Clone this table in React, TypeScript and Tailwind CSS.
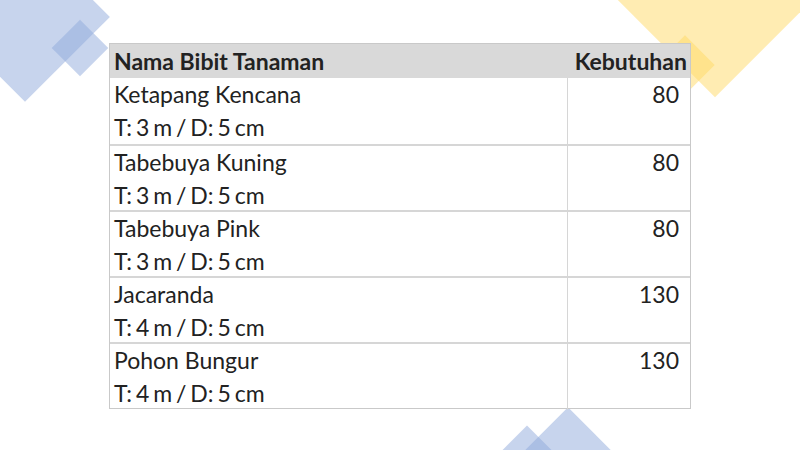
import React from "react";

const rows = [
  { name: "Ketapang Kencana", spec: "T: 3 m / D: 5 cm", qty: "80" },
  { name: "Tabebuya Kuning", spec: "T: 3 m / D: 5 cm", qty: "80" },
  { name: "Tabebuya Pink", spec: "T: 3 m / D: 5 cm", qty: "80" },
  { name: "Jacaranda", spec: "T: 4 m / D: 5 cm", qty: "130" },
  { name: "Pohon Bungur", spec: "T: 4 m / D: 5 cm", qty: "130" },
];

function Decorations() {
  return (
    <div className="absolute inset-0 pointer-events-none">
      <div className="absolute left-[-35px] top-[-43px] w-[120px] h-[120px] rotate-45 bg-[rgba(143,170,220,0.5)]" />
      <div className="absolute left-[60px] top-[28px] w-[40px] h-[40px] rotate-45 bg-[rgba(143,170,220,0.5)]" />
      <div className="absolute left-[630px] top-[-108px] w-[170px] h-[170px] rotate-45 bg-[rgba(255,217,102,0.5)]" />
      <div className="absolute left-[664px] top-[44px] w-[42px] h-[42px] rotate-45 bg-[rgba(255,217,102,0.5)]" />
      <div className="absolute left-[518px] top-[428px] w-[100px] h-[100px] rotate-45 bg-[rgba(143,170,220,0.5)]" />
      <div className="absolute left-[497px] top-[438px] w-[60px] h-[60px] rotate-45 bg-[rgba(143,170,220,0.5)]" />
    </div>
  );
}

export default function App() {
  return (
    <div
      className="relative w-[800px] h-[450px] overflow-hidden bg-white flex justify-center pt-[43px]"
      style={{ fontFamily: "Lato, 'Open Sans', sans-serif" }}
    >
      <Decorations />
      <div className="relative w-[582px] h-fit border border-[#c9c9c9] bg-white text-[#222222]">
        <div className="grid grid-cols-[458px_1fr] h-[34px] bg-[#d9d9d9] font-bold text-[23px] items-center">
          <div className="pl-[4px]">Nama Bibit Tanaman</div>
          <div className="text-right pr-[3px] whitespace-nowrap">Kebutuhan</div>
        </div>
        {rows.map((r, i) => (
          <div
            key={i}
            className={`grid grid-cols-[458px_1fr] h-[66px] text-[23px] ${i > 0 ? "border-t-2 border-[#d6d6d6]" : ""}`}
          >
            <div className="pl-[4px] border-r border-[#d6d6d6] flex flex-col">
              <div className="h-[33px] leading-[33px]">{r.name}</div>
              <div className="h-[33px] leading-[33px] [word-spacing:-2px]">{r.spec}</div>
            </div>
            <div className="text-right pr-[11px] leading-[33px]">{r.qty}</div>
          </div>
        ))}
      </div>
    </div>
  );
}
